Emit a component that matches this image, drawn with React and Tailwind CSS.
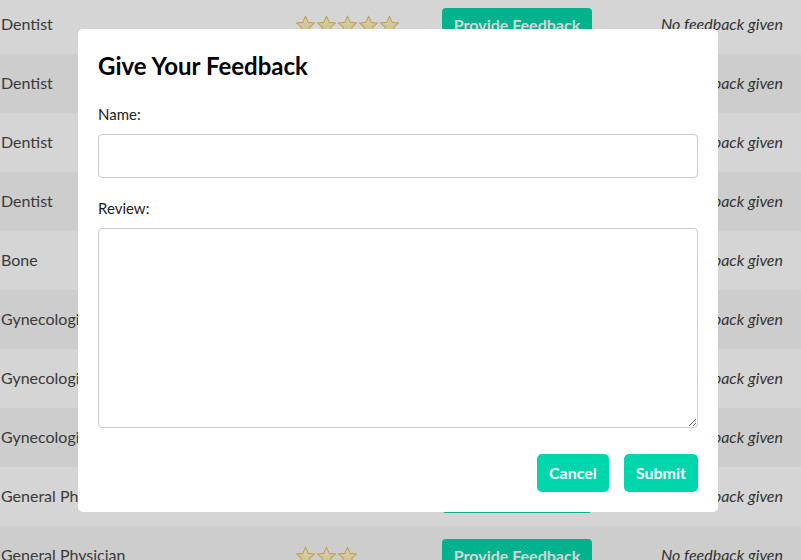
import { useState } from 'react'

const rows = [
    { specialty: 'Dentist', stars: 5 },
    { specialty: 'Dentist', stars: 4 },
    { specialty: 'Dentist', stars: 5 },
    { specialty: 'Dentist', stars: 3 },
    { specialty: 'Bone', stars: 4 },
    { specialty: 'Gynecologist', stars: 5 },
    { specialty: 'Gynecologist', stars: 4 },
    { specialty: 'Gynecologist', stars: 3 },
    { specialty: 'General Physician', stars: 4 },
    { specialty: 'General Physician', stars: 3 },
]

const Star = () => (
    <svg width="21" height="20" viewBox="0 0 24 23">
        <defs>
            <linearGradient id="starFill" x1="0" y1="0" x2="0" y2="1">
                <stop offset="0" stopColor="#fffbe0" />
                <stop offset="1" stopColor="#fbe39a" />
            </linearGradient>
        </defs>
        <path
            d="M12 1.5l3.1 7 7.4.6-5.6 4.9 1.7 7.3L12 17.4l-6.6 3.9 1.7-7.3L1.5 9.1l7.4-.6z"
            fill="url(#starFill)"
            stroke="#e9bf62"
            strokeWidth="1.2"
            strokeLinejoin="round"
        />
    </svg>
)

const Row = ({ specialty, stars, index }) => (
    <div
        className={`h-[59px] flex items-center ${index % 2 === 0 ? 'bg-white' : 'bg-[#f6f6f6]'}`}
    >
        <div className="w-[295px] pl-px text-[16px] text-[#474747] -mt-[2px]">{specialty}</div>
        <div className="w-[147px] flex">
            {Array.from({ length: stars }).map((_, i) => (
                <Star key={i} />
            ))}
        </div>
        <button className="w-[150px] h-[33px] rounded-[4px] bg-[#00d6ab] text-white font-bold text-[16px]">
            Provide Feedback
        </button>
        <div className="flex-1 pr-[18px] text-right italic text-[16px] text-[#3d3d3d] -mt-[2px]">
            No feedback given
        </div>
    </div>
)

const App = () => {
    const [name, setName] = useState('')
    const [review, setReview] = useState('')

    return (
        <div className="relative font-[Lato,'Liberation_Sans',sans-serif] h-[560px] overflow-hidden">
            {/* table behind the modal */}
            <div className="-mt-[5px]">
                {rows.map((r, i) => (
                    <Row key={i} index={i} {...r} />
                ))}
            </div>

            {/* overlay */}
            <div className="fixed inset-0 bg-black/[0.165]" />

            {/* modal */}
            <div className="absolute left-[78px] top-[29px] w-[640px] bg-white rounded-[5px] px-5 pt-[23px] pb-5">
                <h2 className="text-[24px] leading-[1.2] font-bold text-black">Give Your Feedback</h2>

                <label className="block mt-[22px] text-[15px] text-[#222]">Name:</label>
                <input
                    value={name}
                    onChange={e => setName(e.target.value)}
                    className="block mt-[9px] w-full h-[44px] border border-[#cccccc] rounded-[4px] px-2 outline-none"
                />

                <label className="block mt-[19px] text-[15px] text-[#222]">Review:</label>
                <textarea
                    value={review}
                    onChange={e => setReview(e.target.value)}
                    className="block mt-[8px] w-full h-[200px] border border-[#cccccc] rounded-[4px] px-2 outline-none"
                />

                <div className="flex justify-end gap-[15px] mt-[26px]">
                    <button className="h-[38px] px-3 rounded-[5px] bg-[#00d6ab] text-white font-bold text-[16px]">
                        Cancel
                    </button>
                    <button className="h-[38px] px-3 rounded-[5px] bg-[#00d6ab] text-white font-bold text-[16px]">
                        Submit
                    </button>
                </div>
            </div>
        </div>
    )
}

export default App
